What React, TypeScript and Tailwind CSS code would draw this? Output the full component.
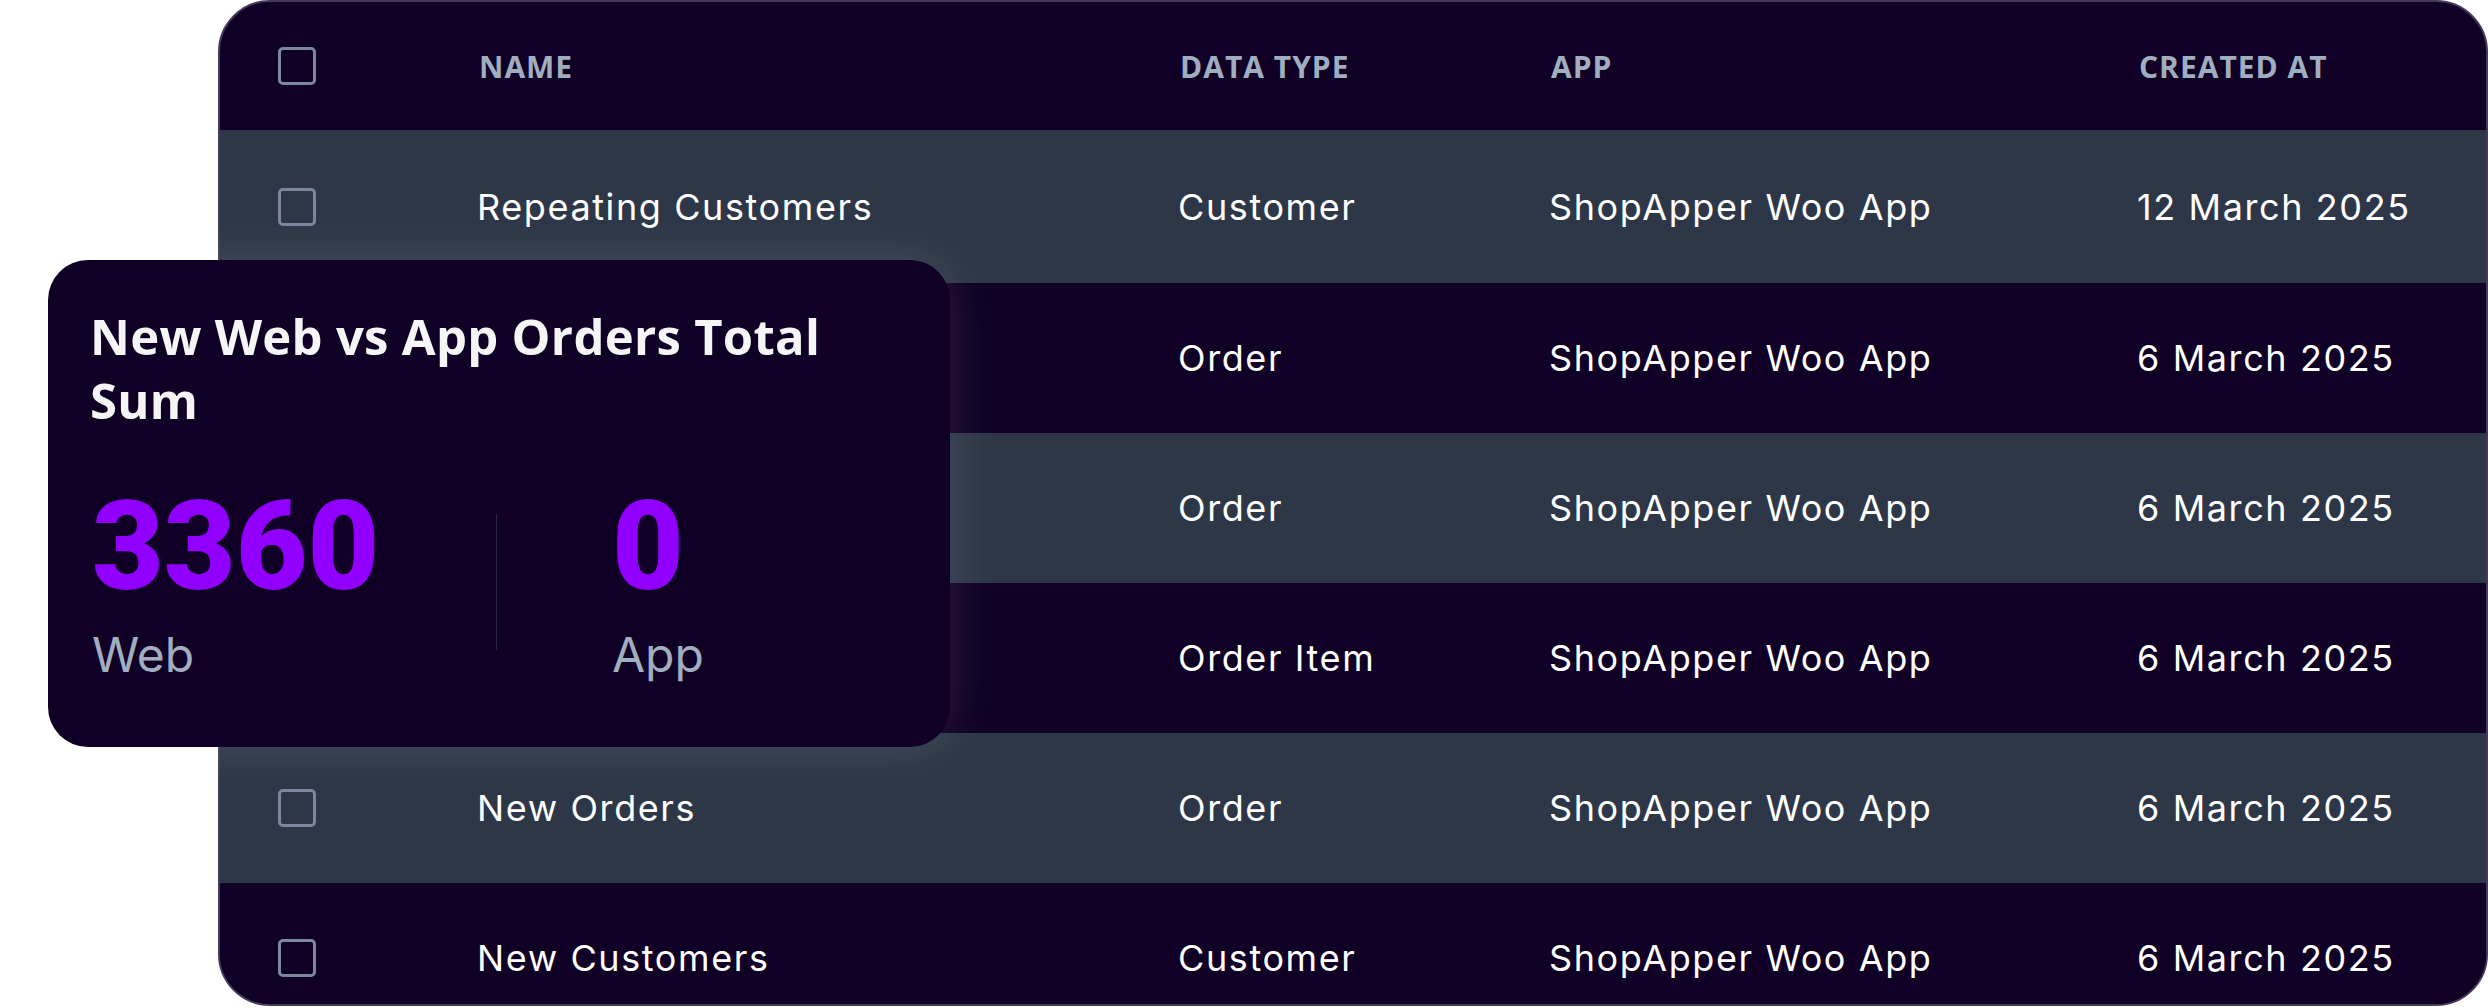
import React from "react";

// names of rows 2-4 sit under the stat card, so they are left blank
const rows = [
  { id: 1, name: "Repeating Customers", type: "Customer", app: "ShopApper Woo App", created: "12 March 2025" },
  { id: 2, name: "", type: "Order", app: "ShopApper Woo App", created: "6 March 2025" },
  { id: 3, name: "", type: "Order", app: "ShopApper Woo App", created: "6 March 2025" },
  { id: 4, name: "", type: "Order Item", app: "ShopApper Woo App", created: "6 March 2025" },
  { id: 5, name: "New Orders", type: "Order", app: "ShopApper Woo App", created: "6 March 2025" },
  { id: 6, name: "New Customers", type: "Customer", app: "ShopApper Woo App", created: "6 March 2025" },
];

const cols = "grid grid-cols-[259px_701px_371px_588px_1fr] items-center";

function Checkbox() {
  return <span className="ml-[58px] block w-[38px] h-[38px] rounded-[5px] border-[3px] border-[#7a879c]" />;
}

export default function App() {
  return (
    <div className="relative w-[2488px] h-[1008px] bg-white overflow-hidden">
      <div className="ml-[218px] w-[2270px] h-[1006px] rounded-[52px] border-2 border-[#45385a] bg-[#100026] overflow-hidden">
        <div className={`${cols} h-[128px] font-['Open_Sans',sans-serif] font-bold text-[30px] tracking-[1px] text-[#a0aec0] uppercase`}>
          <Checkbox />
          <span>Name</span>
          <span>Data Type</span>
          <span>App</span>
          <span>Created At</span>
        </div>
        {rows.map((row, i) => (
          <div
            key={row.id}
            className={`${cols} ${i === 0 ? "h-[153px]" : "h-[150px]"} font-['Inter',sans-serif] text-[36px] tracking-[1.6px] text-white ${i % 2 === 0 ? "bg-[#2d3748]" : "bg-[#100026]"}`}
          >
            <Checkbox />
            <span className="-ml-[2px]">{row.name}</span>
            <span className="-ml-[2px]">{row.type}</span>
            <span className="-ml-[2px]">{row.app}</span>
            <span className="-ml-[2px]">{row.created}</span>
          </div>
        ))}
      </div>

      {/* floating stat card */}
      <div className="absolute left-[48px] top-[260px] w-[902px] h-[487px] rounded-[40px] bg-[#100026] shadow-[0_0_50px_rgba(255,255,255,0.12)] pl-[42px] pt-[44px]">
        <h2 className="w-[800px] font-['Open_Sans',sans-serif] font-bold text-[49px] leading-[64px] tracking-[0.3px] text-[#f5f5f5]">
          New Web vs App Orders Total Sum
        </h2>
        <div className="mt-[53px] ml-[2px] grid grid-cols-[404px_1px_1fr] items-center">
          <div>
            <div className="font-['Roboto',sans-serif] font-black text-[124px] leading-none text-[#9100ff]">3360</div>
            <div className="mt-[22px] font-['Inter',sans-serif] text-[48px] leading-none text-[#a0aec0]">Web</div>
          </div>
          <div className="h-[136px] bg-[#2e2540]" />
          <div className="pl-[115px]">
            <div className="font-['Roboto',sans-serif] font-black text-[124px] leading-none text-[#9100ff]">0</div>
            <div className="mt-[22px] font-['Inter',sans-serif] text-[48px] leading-none text-[#a0aec0]">App</div>
          </div>
        </div>
      </div>
    </div>
  );
}
